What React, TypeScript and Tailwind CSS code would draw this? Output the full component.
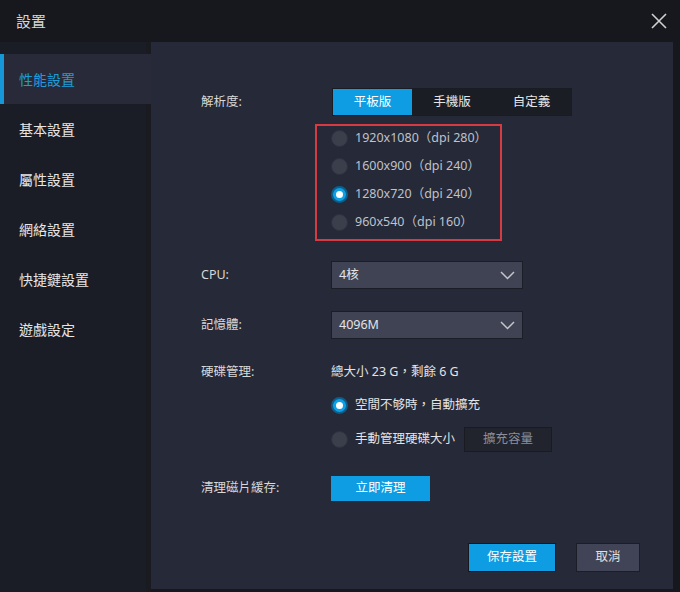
import React from "react";

const font = { fontFamily: '"Noto Sans", "Noto Sans CJK TC", sans-serif' };

function Radio({ checked }: { checked?: boolean }) {
  if (checked) {
    return (
      <span className="w-[17px] h-[17px] rounded-full bg-[#0f9fe4] border-[2px] border-[#0b5f8c] flex items-center justify-center shrink-0">
        <span className="w-[7px] h-[7px] rounded-full bg-white" />
      </span>
    );
  }
  return <span className="w-[17px] h-[17px] rounded-full bg-[#3b3e4b] border border-[#2e3140] shrink-0" />;
}

function Chevron() {
  return (
    <svg width="15" height="9" viewBox="0 0 15 9" className="shrink-0">
      <path d="M1 1 L7.5 7.5 L14 1" fill="none" stroke="#c4c6cc" strokeWidth="1.5" />
    </svg>
  );
}

function Select({ value }: { value: string }) {
  return (
    <div className="w-[192px] h-[28px] bg-[#3f4354] border border-[#1c1e27] flex items-center justify-between pl-[7px] pr-[7px] text-[12.5px] text-[#e4e4e4]">
      <span>{value}</span>
      <Chevron />
    </div>
  );
}

const navItems = ["性能設置", "基本設置", "屬性設置", "網絡設置", "快捷鍵設置", "遊戲設定"];

export default function App() {
  return (
    <div className="w-[680px] h-[592px] bg-[#16181e] flex flex-col overflow-hidden" style={font}>
      <div className="h-[42px] flex items-center justify-between shrink-0">
        <span className="pl-[16px] text-[15px] text-[#d6d6d6]">設置</span>
        <svg width="16" height="16" viewBox="0 0 16 16" className="mr-[13px]">
          <path d="M1 1 L15 15 M15 1 L1 15" stroke="#d0d0d0" strokeWidth="1.6" />
        </svg>
      </div>
      <div className="flex flex-1 min-h-0">
        <div className="w-[151px] bg-[#1b1d26] border-r-[5px] border-[#191b21] pt-[12px] flex flex-col shrink-0">
          {navItems.map((n, i) => (
            <div
              key={n}
              className={
                i === 0
                  ? "h-[50px] flex items-center bg-[#282a39] border-l-[4px] border-[#1597d8] pl-[15px] text-[14px] text-[#1e9bd8] -mr-[5px]"
                  : "h-[50px] flex items-center pl-[19px] text-[14px] text-[#e6e6e6]"
              }
            >
              {n}
            </div>
          ))}
        </div>
        <div className="w-[522px] h-[547px] bg-[#262937] flex flex-col pl-[50px] pt-[46px] pr-[33px] text-[12.5px] text-[#d8d8d8]">
          <div className="flex items-center h-[28px]">
            <span className="w-[131px]">解析度:</span>
            <div className="flex h-[28px] bg-[#1b1d25] border border-[#1a1c23]">
              <div className="w-[79px] flex items-center justify-center bg-[#0e9de3] text-white">平板版</div>
              <div className="w-[80px] flex items-center justify-center text-[#e6e6e6]">手機版</div>
              <div className="w-[79px] flex items-center justify-center text-[#e6e6e6]">自定義</div>
            </div>
          </div>
          <div className="flex mt-[8px]">
            <span className="w-[114px]" />
            <div className="w-[187px] border-[2px] border-[#d63a42] pt-[4px] pb-[8px] pl-[14px] flex flex-col gap-[11px] text-[#bfc2cb]">
              {[
                ["1920x1080（dpi 280）", false],
                ["1600x900（dpi 240）", false],
                ["1280x720（dpi 240）", true],
                ["960x540（dpi 160）", false],
              ].map(([t, c]) => (
                <div key={t as string} className="flex items-center gap-[7px] h-[17px] whitespace-nowrap">
                  <Radio checked={c as boolean} />
                  <span>{t as string}</span>
                </div>
              ))}
            </div>
          </div>
          <div className="flex items-center mt-[20px]">
            <span className="w-[130px]">CPU:</span>
            <Select value="4核" />
          </div>
          <div className="flex items-center mt-[22px]">
            <span className="w-[130px]">記憶體:</span>
            <Select value="4096M" />
          </div>
          <div className="flex items-center mt-[19px] h-[28px]">
            <span className="w-[130px]">硬碟管理:</span>
            <span className="text-[#e4e4e4]">總大小 23 G，剩餘 6 G</span>
          </div>
          <div className="flex items-center mt-[5px] h-[28px]">
            <span className="w-[130px]" />
            <div className="flex items-center gap-[7px] text-[#e4e4e4]">
              <Radio checked />
              <span>空間不够時，自動擴充</span>
            </div>
          </div>
          <div className="flex items-center mt-[6px] h-[28px]">
            <span className="w-[130px]" />
            <div className="flex items-center gap-[7px] text-[#e4e4e4]">
              <Radio />
              <span>手動管理硬碟大小</span>
            </div>
            <div className="ml-[9px] w-[88px] h-[25px] bg-[#22242d] border border-[#191b21] flex items-center justify-center text-[#8b8e99]">
              擴充容量
            </div>
          </div>
          <div className="flex items-center mt-[22px] h-[26px]">
            <span className="w-[130px]">清理磁片緩存:</span>
            <div className="w-[99px] h-[25px] bg-[#0e9de3] flex items-center justify-center text-white">立即清理</div>
          </div>
          <div className="flex justify-end gap-[20px] mt-[42px]">
            <div className="w-[88px] h-[29px] bg-[#0e9de3] border border-[#16181e] flex items-center justify-center text-white">
              保存設置
            </div>
            <div className="w-[64px] h-[29px] bg-[#414456] border border-[#1c1e26] flex items-center justify-center text-[#e0e0e0]">
              取消
            </div>
          </div>
        </div>
      </div>
    </div>
  );
}
